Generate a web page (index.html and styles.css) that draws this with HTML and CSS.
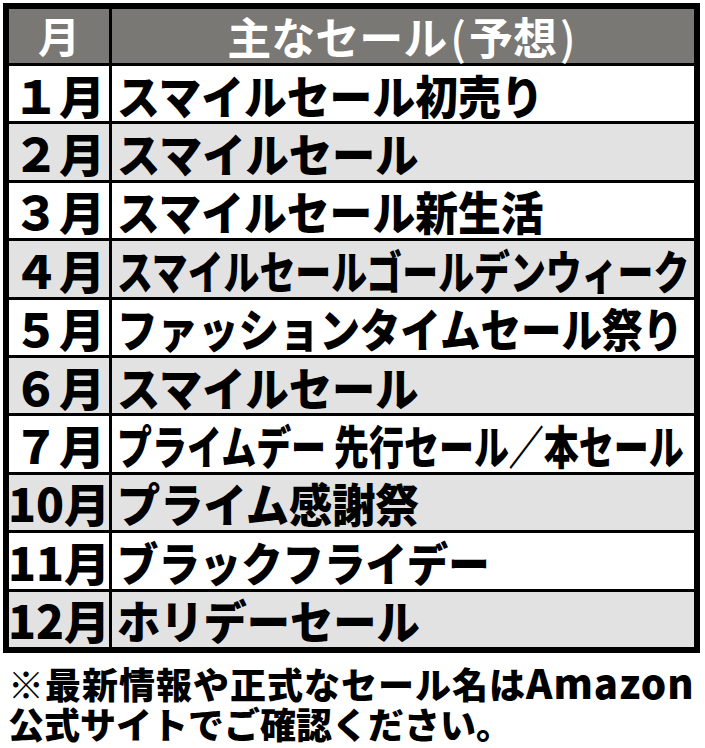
FILE: index.html
```html
<!DOCTYPE html>
<html lang="ja">
<head>
<meta charset="utf-8">
<title>主なセール（予想）</title>
<link rel="stylesheet" href="styles.css">
</head>
<body>
<div class="table">
  <div class="cell head month">月</div>
  <div class="cell head sale">主なセール<span class="paren">(</span>予想<span class="paren">)</span></div>

  <div class="cell month odd">１月</div>
  <div class="cell sale odd"><span class="fit s93">スマイルセール初売り</span></div>

  <div class="cell month even">２月</div>
  <div class="cell sale even"><span class="fit s94">スマイルセール</span></div>

  <div class="cell month odd">３月</div>
  <div class="cell sale odd"><span class="fit s93">スマイルセール新生活</span></div>

  <div class="cell month even">４月</div>
  <div class="cell sale even"><span class="fit s78">スマイルセールゴールデンウィーク</span></div>

  <div class="cell month odd">５月</div>
  <div class="cell sale odd"><span class="fit s88">ファッションタイムセール祭り</span></div>

  <div class="cell month even">６月</div>
  <div class="cell sale even"><span class="fit s94">スマイルセール</span></div>

  <div class="cell month odd">７月</div>
  <div class="cell sale odd"><span class="fit s76">プライムデー 先行セール／本セール</span></div>

  <div class="cell month even">10月</div>
  <div class="cell sale even"><span class="fit s94">プライム感謝祭</span></div>

  <div class="cell month odd">11月</div>
  <div class="cell sale odd"><span class="fit s90">ブラックフライデー</span></div>

  <div class="cell month even">12月</div>
  <div class="cell sale even"><span class="fit s94">ホリデーセール</span></div>
</div>
<div class="note">
  <div class="line1">※最新情報や正式なセール名は<span class="latin">Amazon</span></div>
  <div class="line2">公式サイトでご確認ください。</div>
</div>
</body>
</html>
```

FILE: styles.css
```css
html, body {
  margin: 0;
  padding: 0;
  background: #ffffff;
}
body {
  padding: 3px 0 0 3px;
  font-family: "Noto Sans CJK JP", "Noto Sans", sans-serif;
  font-weight: 900;
  color: #000000;
}
.table {
  width: 697px;
  box-sizing: border-box;
  border: 6px solid #000000;
  background: #000000;
  display: grid;
  grid-template-columns: 100px minmax(0, 1fr);
  grid-template-rows: 54px repeat(10, 55.4px);
  gap: 3px;
}
.cell {
  display: flex;
  align-items: center;
  min-width: 0;
  overflow: visible;
  white-space: nowrap;
  line-height: 1;
}
.head {
  background: #797874;
  color: #ffffff;
  font-size: 42px;
  font-weight: 700;
  justify-content: center;
}
.head.month {
  padding-bottom: 2px;
}
.odd { background: #ffffff; }
.even { background: #e2e2e2; }
.month {
  justify-content: center;
  font-size: 46px;
}
.head.month { font-size: 42px; }
.sale {
  font-size: 46px;
  padding-left: 5px;
}
.head.sale {
  padding-left: 0;
  font-size: 44px;
}
.paren {
  font-weight: 500;
  padding: 0 3px;
}
.fit {
  display: inline-block;
  transform-origin: left center;
}
.s94 { transform: scaleX(0.94); }
.s93 { transform: scaleX(0.93); }
.s90 { transform: scaleX(0.90); }
.s88 { transform: scaleX(0.88); }
.s78 { transform: scaleX(0.78); }
.s76 { transform: scaleX(0.76); }
.note {
  margin: 9px 0 0 5px;
  font-size: 36px;
  line-height: 40px;
  white-space: nowrap;
}
.line1 {
  letter-spacing: 1px;
}
.latin {
  font-size: 40px;
  letter-spacing: 1px;
}
```
